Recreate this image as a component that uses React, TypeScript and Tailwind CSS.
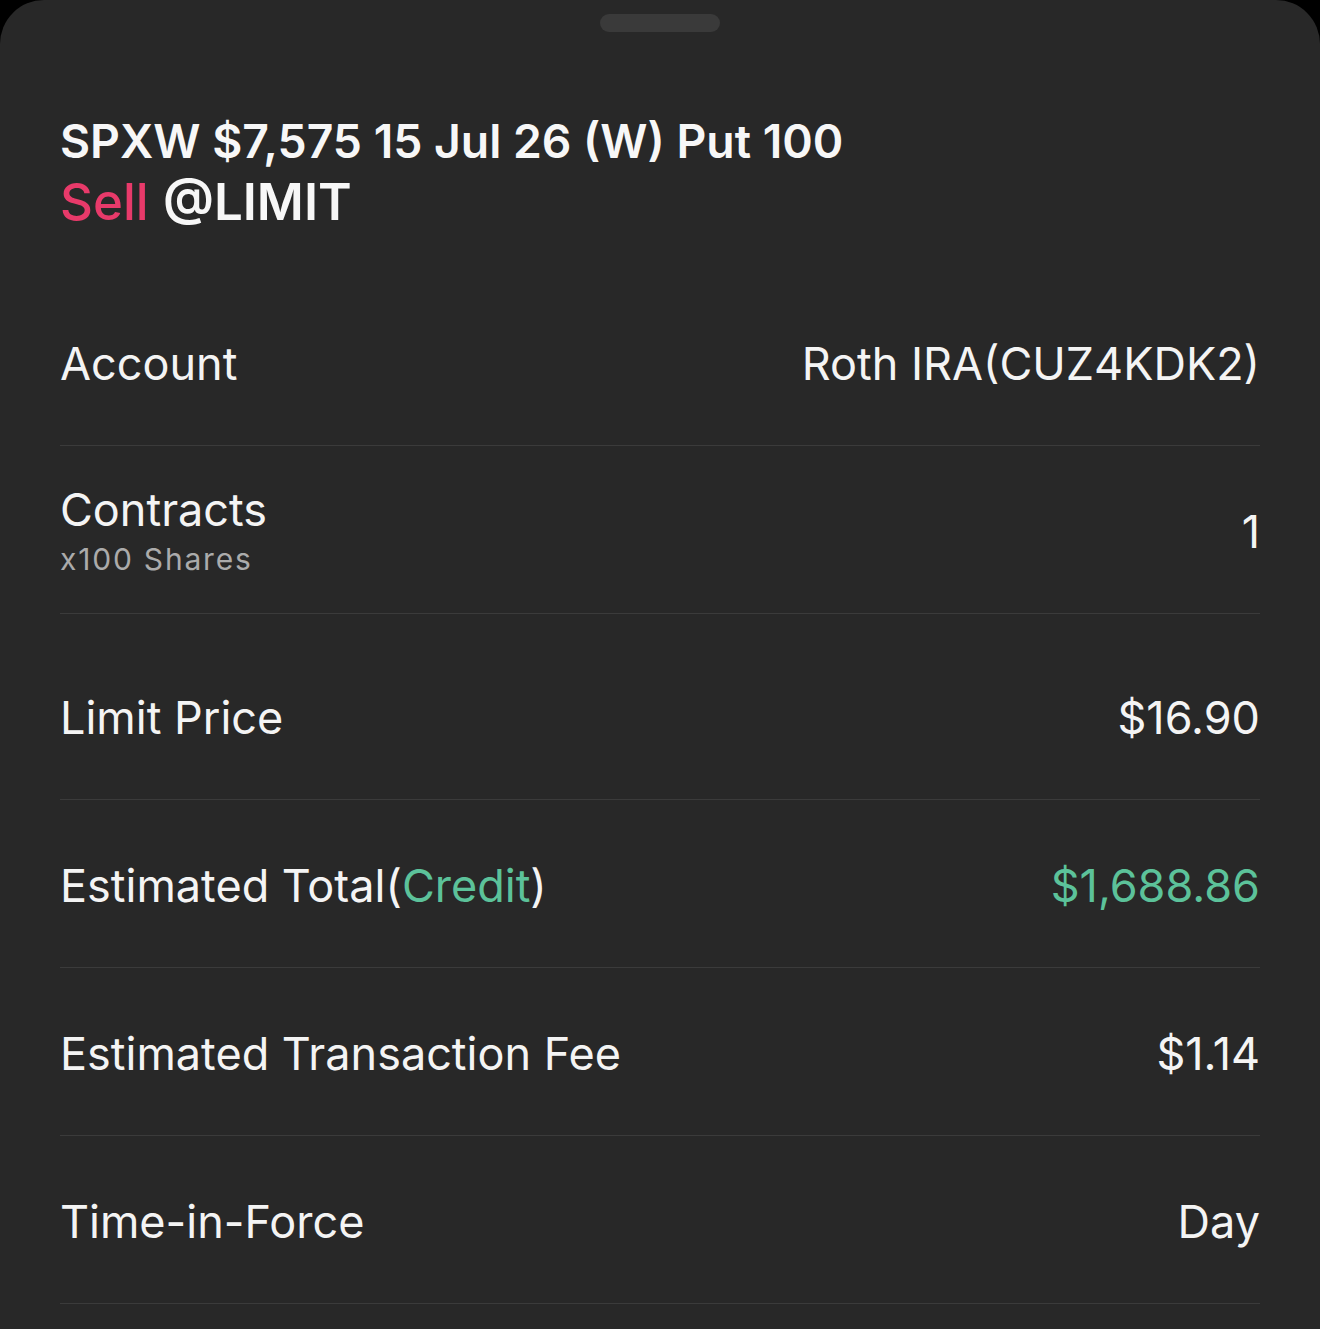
import type { ReactNode } from "react";

interface RowProps {
	label: ReactNode;
	sub?: string;
	value: ReactNode;
	tall?: boolean;
}

function Row(props: RowProps) {
	const { label, sub, value, tall } = props;

	return (
		<div
			className={
				tall
					? "flex h-[186px] items-center justify-between border-b border-[#3b3b3b] pt-[22px]"
					: "flex h-[168px] items-center justify-between border-b border-[#3b3b3b] pt-[5px]"
			}
		>
			<div className={sub ? "flex flex-col pb-[6px]" : "flex flex-col"}>
				<span className="text-[45px] leading-[56px] text-[#f4f4f4]">{label}</span>
				{sub ? (
					<span className="mt-[3px] text-[30px] leading-[36px] tracking-[0.06em] text-[#ababab]">
						{sub}
					</span>
				) : null}
			</div>
			<span className="text-[45px] leading-[56px] text-[#f4f4f4]">{value}</span>
		</div>
	);
}

export default function App() {
	return (
		<div className="min-h-screen bg-black" style={{ fontFamily: "Inter, 'Noto Sans', sans-serif" }}>
			<div className="min-h-[1329px] rounded-t-[44px] bg-[#282828] pt-[14px]">
				<div className="mx-auto h-[18px] w-[120px] rounded-full bg-[#3a3a3a]" />

				<div className="px-[60px]">
					<header className="mt-[81px] flex flex-col">
						<h1 className="text-[46.3px] font-semibold leading-[56px] text-[#f7f7f7]">
							SPXW $7,575 15 Jul 26 (W) Put 100
						</h1>
						<p className="mt-[2px] text-[51px] leading-[62px]">
							<span className="font-medium text-[#e83a6a]">Sell</span>{" "}
							<span className="font-semibold text-[#f7f7f7]">@LIMIT</span>
						</p>
					</header>

					<div className="mt-[45px] flex flex-col">
						<Row label="Account" value="Roth IRA(CUZ4KDK2)" />
						<Row label="Contracts" sub="x100 Shares" value="1" />
						<Row label="Limit Price" value="$16.90" tall />
						<Row
							label={
								<>
									Estimated Total(<span className="text-[#5cc29a]">Credit</span>)
								</>
							}
							value={<span className="text-[#5cc29a]">$1,688.86</span>}
						/>
						<Row label="Estimated Transaction Fee" value="$1.14" />
						<Row label="Time-in-Force" value="Day" />
					</div>
				</div>
			</div>
		</div>
	);
}
